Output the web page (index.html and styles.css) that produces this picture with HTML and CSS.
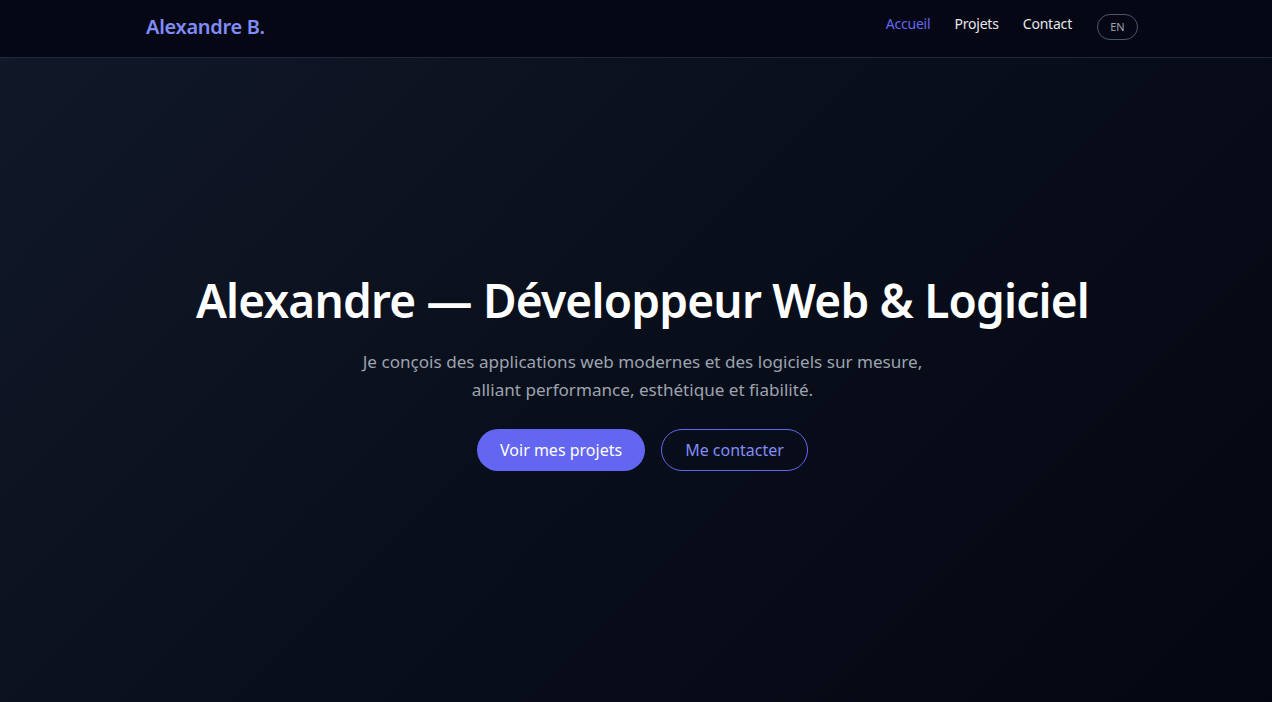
FILE: index.html
```html
<!DOCTYPE html>
<html lang="fr">
<head>
<meta charset="utf-8">
<title>Alexandre B.</title>
<link rel="stylesheet" href="styles.css">
</head>
<body>
<header class="site-header">
  <div class="container header-inner">
    <a class="logo" href="#">Alexandre B.</a>
    <nav class="nav">
      <a class="nav-link active" href="#">Accueil</a>
      <a class="nav-link" href="#">Projets</a>
      <a class="nav-link" href="#">Contact</a>
      <button class="lang">EN</button>
    </nav>
  </div>
</header>
<main class="hero">
  <div class="hero-content">
    <h1 class="title">Alexandre — Développeur Web &amp; Logiciel</h1>
    <p class="subtitle">Je conçois des applications web modernes et des logiciels sur mesure,<br>alliant performance, esthétique et fiabilité.</p>
    <div class="actions">
      <a class="btn btn-primary" href="#">Voir mes projets</a>
      <a class="btn btn-outline" href="#">Me contacter</a>
    </div>
  </div>
</main>
</body>
</html>
```
FILE: styles.css
```css
* { box-sizing: border-box; }
html, body { margin: 0; padding: 0; height: 100%; }
body {
  font-family: "Noto Sans", "Open Sans", sans-serif;
  background: #030712;
  color: #fff;
  display: flex;
  flex-direction: column;
  min-height: 702px;
}
a { text-decoration: none; }
.site-header {
  background: #050814;
  border-bottom: 1px solid #1f2937;
  height: 58px;
  flex: 0 0 auto;
}
.container {
  width: 992px;
  margin: 0 auto;
}
.header-inner {
  height: 57px;
  display: flex;
  align-items: center;
  justify-content: space-between;
  padding: 0 0 4px 6px;
}
.logo {
  color: #818cf8;
  font-size: 20px;
  font-weight: 600;
  letter-spacing: -0.3px;
}
.nav {
  display: flex;
  align-items: center;
  gap: 24px;
  margin-right: -6px;
  margin-top: -7px;
}
.nav-link {
  color: #e5e7eb;
  font-size: 14px;
  letter-spacing: -0.2px;
}
.nav-link.active { color: #6366f1; }
.lang {
  font-family: inherit;
  background: transparent;
  color: #9ca3af;
  border: 1px solid #4b5563;
  border-radius: 999px;
  font-size: 11px;
  height: 26px;
  width: 41px;
  padding: 0;
  margin-top: 7px;
  margin-left: 1px;
}
.hero {
  flex: 1;
  background: linear-gradient(135deg, #111827 0%, #0a0f1c 45%, #030712 100%);
  display: flex;
  justify-content: center;
  padding-top: 212px;
  padding-left: 13px;
}
.hero-content { text-align: center; }
.title {
  margin: 0;
  font-size: 46px;
  font-weight: 600;
  letter-spacing: -0.8px;
  line-height: 60px;
}
.subtitle {
  margin: 18px 0 0;
  color: #9ca3af;
  font-size: 17.1px;
  line-height: 28px;
  letter-spacing: 0;
}
.actions {
  margin-top: 25px;
  display: flex;
  justify-content: center;
  gap: 16px;
}
.btn {
  height: 42px;
  display: inline-flex;
  align-items: center;
  border-radius: 999px;
  font-size: 16px;
  padding: 0 23px;
}
.btn-primary { background: #6366f1; color: #fff; }
.btn-outline { border: 1px solid #6366f1; color: #818cf8; }
```
